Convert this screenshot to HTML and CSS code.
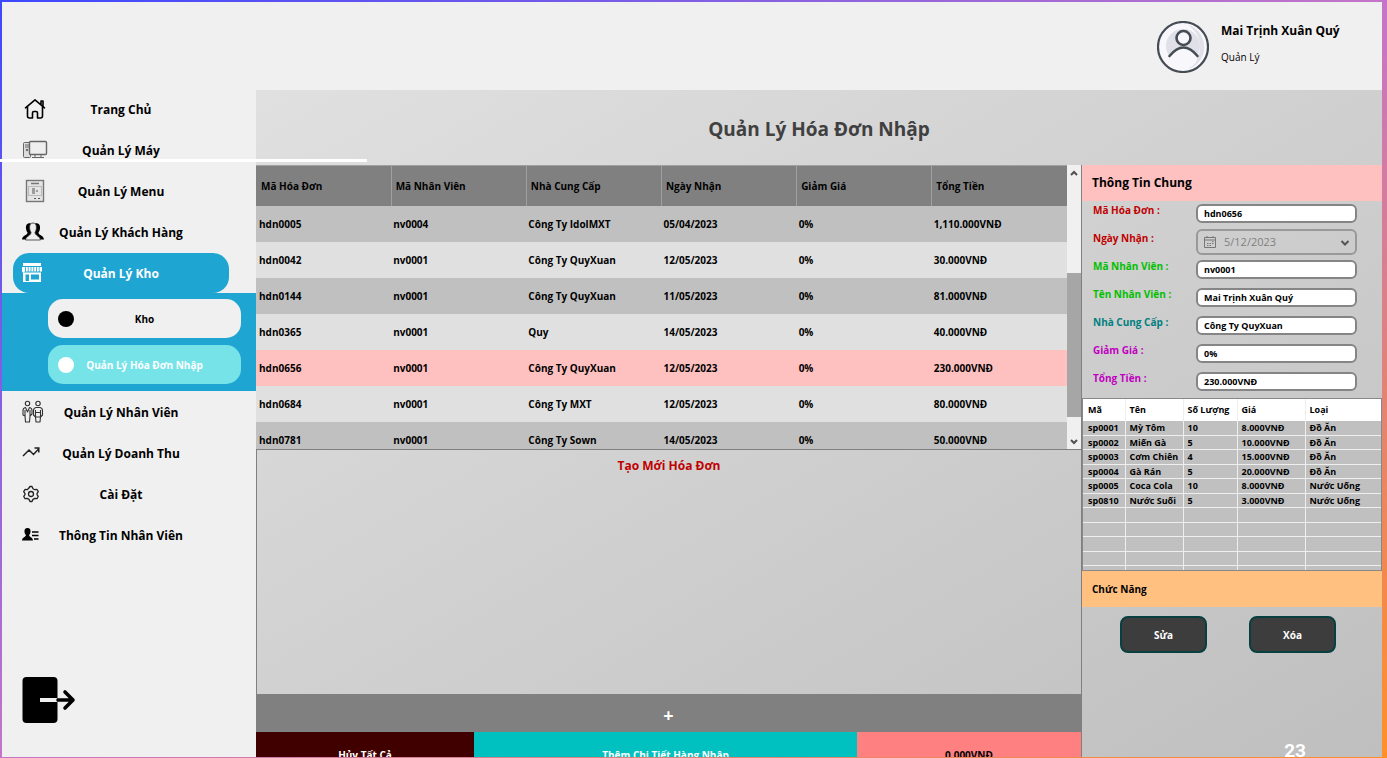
FILE: index.html
```html
<!DOCTYPE html>
<html lang="vi">
<head>
<meta charset="utf-8">
<title>Quản Lý Hóa Đơn Nhập</title>
<link rel="stylesheet" href="styles.css">
</head>
<body>
<div class="app">
  <nav class="sidebar">
    <a class="nav-item" href="#">
      <svg class="icon" width="24" height="24" viewBox="0 0 24 24" fill="none" stroke="#000" stroke-width="1.6" stroke-linejoin="round" stroke-linecap="round"><path d="M2.500 10.800 12 2.800l9.500 8M18 7.500V4h2v5M4.500 9.500V19q0 2 2 2h3v-5q0-1.500 1.500-1.500h2q1.500 0 1.500 1.500v5h3q2 0 2-2V9.500"/></svg>
      <span>Trang Chủ</span>
    </a>
    <a class="nav-item" href="#">
      <svg class="icon" width="26" height="24" viewBox="0 0 26 24" fill="none" stroke="#666" stroke-width="1"><rect x="1.500" y="4.500" width="7" height="15" rx="1" fill="#ddd"/><path d="M3 7h4M3 9h4" /><circle cx="5" cy="12" r=".8" fill="#333"/><rect x="7.500" y="3.500" width="17" height="13" rx="1" fill="#eee" stroke-width="1.400"/><path d="M13 17v2M19 17v2M10 19.500h12"/></svg>
      <span>Quản Lý Máy</span>
    </a>
    <a class="nav-item" href="#">
      <svg class="icon" width="24" height="24" viewBox="0 0 24 24" fill="none" stroke="#777"><rect x="3.500" y="1.500" width="17" height="21" fill="#e4e4e4" stroke="#777" stroke-width="1.400"/><rect x="5.500" y="7.500" width="13" height="9" stroke="#bbb"/><path d="M8 4.500h8" stroke-width="1.500"/><path d="M9 10h3M9 12h3M9 14h3M13 12h2" stroke="#555"/><path d="M11 19.500h2M15 19.500h2" stroke="#555"/></svg>
      <span>Quản Lý Menu</span>
    </a>
    <a class="nav-item" href="#">
      <svg class="icon icon-left" width="24" height="22" viewBox="0 0 24 22"><path d="M9 2.500C5.500 1.500 3.500 4 4 7.500c.2 2 .8 3 1.500 4C6 14 .5 14 0 18.500h5.500q1-3.500 5-5zM13 2.500c3.500-1 5.500 1.500 5 5-.2 2-.8 3-1.500 4-.5 2.500 5 2.500 5.500 7h-5.500q-1-3.500-5-5z" fill="#000"/><path d="M11 2c-2.600 0-3.700 2.200-3.400 5 .2 2.200.8 3.200 1.400 4.200.3 3.300-5 3.800-5.500 7.800h15c-.5-4-5.800-4.500-5.500-7.800.6-1 1.200-2 1.400-4.200.3-2.800-.8-5-3.400-5z" fill="#eee" stroke="#333" stroke-width=".8"/></svg>
      <span>Quản Lý Khách Hàng</span>
    </a>
    <div class="nav-group">
      <a class="nav-item active" href="#">
        <svg class="icon icon-left" width="20" height="20" viewBox="0 0 20 20"><path d="M1 0h18v3H1zM0 4h3v4a1.500 1.500 0 0 1-3 0zM3.800 4h2v4.500h-2zM6.600 4h2v4.500h-2zM9.400 4h2v4.500h-2zM12.200 4h2v4.500h-2zM15 4h1.800v4.500H15zM17.500 4H20v4a1.500 1.500 0 0 1-2.500 0z" fill="#fff"/><path d="M1 9.500h18V19H1zM3.500 11.500V18h3.500v-6.500zM9 11.500v5h8v-5z" fill="#fff" fill-rule="evenodd"/></svg>
        <span>Quản Lý Kho</span>
      </a>
      <div class="submenu">
        <a class="sub-item" href="#"><i class="dot"></i><span>Kho</span></a>
        <a class="sub-item current" href="#"><i class="dot"></i><span>Quản Lý Hóa Đơn Nhập</span></a>
      </div>
    </div>
    <a class="nav-item" href="#">
      <svg class="icon icon-left" width="22" height="24" viewBox="0 0 22 24" fill="none" stroke="#333" stroke-width="1.100" stroke-linejoin="round"><circle cx="5.500" cy="3.500" r="2.200"/><path d="M3.500 7.500Q1 8 1 10.500V15l2 1 .5 6h4l.5-6 2-2v-3.500q0-2.500-2.500-3L5.500 12zM3 10v6M8 10v6"/><circle cx="16" cy="3.500" r="2.200"/><path d="M14 7.500q-2.500.5-2.500 3V15l2 2 .5 5h4l.5-5 2-2v-4.500q0-2.500-2.500-3zM13.500 10v7h5v-7M13.500 12.500h5"/></svg>
      <span>Quản Lý Nhân Viên</span>
    </a>
    <a class="nav-item" href="#">
      <svg class="icon icon-left" width="24" height="20" viewBox="0 0 24 20" fill="none" stroke="#222" stroke-width="1.500"><path d="m1 13 6-6 4.500 4.500L17 5.500M12.500 5h4.300v4.500"/></svg>
      <span>Quản Lý Doanh Thu</span>
    </a>
    <a class="nav-item" href="#">
      <svg class="icon icon-left" width="22" height="18" viewBox="1 0 22 18" fill="none" stroke="#222" stroke-width="1.300" stroke-linejoin="round"><path d="M7.500 3.500 9 1.500h2l1 2.200 1.800 1L16 4.500l1.300 2.200-1.300 1.900v1l1.300 1.700L16 13.700l-2.200-.3-1.800 1-1 2.100H9l-1-2.100-1.800-1-2.200.3-1.300-2.400L4 9.600v-1L2.700 6.700 4 4.500l2.200.2z"/><circle cx="10" cy="9" r="2.500"/></svg>
      <span>Cài Đặt</span>
    </a>
    <a class="nav-item" href="#">
      <svg class="icon icon-left" width="22" height="18" viewBox="1 0 22 18"><path d="M6.500 2C4 2 3.200 4 3.500 6c.2 1.500.8 2.500 1.400 3 0 2.500-3.500 1.500-3.900 5.500h11c-.4-4-3.900-3-3.900-5.500.6-.5 1.200-1.500 1.400-3 .3-2-.5-4-3-4z"/><path d="M11 6h6.500M11 9.500h6.500M13 13h4.500" stroke="#000" stroke-width="1.300"/></svg>
      <span>Thông Tin Nhân Viên</span>
    </a>
    <button class="logout" type="button" aria-label="Đăng xuất">
      <svg width="54" height="48" viewBox="0 0 54 48" fill="none" stroke-linecap="round"><rect x=".5" y="1" width="35" height="46" rx="4" fill="#000"/><path d="M18 24H35" stroke="#f0f0f0" stroke-width="4" stroke-linecap="butt"/><path d="M36 24h14M43 16l8 8-8 8" stroke="#000" stroke-width="3.600" stroke-linejoin="round"/></svg>
    </button>
  </nav>

  <header class="topbar">
    <svg width="52" height="52" viewBox="0 0 52 52" fill="none"><circle cx="26" cy="26" r="25" fill="#f8f8fc" stroke="#454c54" stroke-width="2.200"/><path d="M31 4a23 23 0 0 1 0 44 26 26 0 0 0 0-44z" fill="#dfe0e8"/><circle cx="26" cy="25" r="17" fill="#dfe0e8"/><path d="M12 36q14-18 28 0 0 10-14 12-14-2-14-12z" fill="#f8f8fc"/><circle cx="26.500" cy="17" r="7" fill="#f8f8fc" stroke="#454c54" stroke-width="2.600"/><path d="M12.500 35q14-17 28 0" stroke="#454c54" stroke-width="2.600" stroke-linecap="round"/></svg>
    <div class="user">
      <strong>Mai Trịnh Xuân Quý</strong>
      <span>Quản Lý</span>
    </div>
  </header>

  <main class="content">
    <h1>Quản Lý Hóa Đơn Nhập</h1>
    <div class="columns">
      <section class="invoices">
        <div class="list">
          <div class="list-body">
            <table class="invoice-table">
              <thead><tr><th>Mã Hóa Đơn</th><th>Mã Nhân Viên</th><th>Nhà Cung Cấp</th><th>Ngày Nhận</th><th>Giảm Giá</th><th>Tổng Tiền</th></tr></thead>
              <tbody>
                <tr><td>hdn0005</td><td>nv0004</td><td>Công Ty IdolMXT</td><td>05/04/2023</td><td>0%</td><td>1,110.000VNĐ</td></tr>
                <tr><td>hdn0042</td><td>nv0001</td><td>Công Ty QuyXuan</td><td>12/05/2023</td><td>0%</td><td>30.000VNĐ</td></tr>
                <tr><td>hdn0144</td><td>nv0001</td><td>Công Ty QuyXuan</td><td>11/05/2023</td><td>0%</td><td>81.000VNĐ</td></tr>
                <tr><td>hdn0365</td><td>nv0001</td><td>Quy</td><td>14/05/2023</td><td>0%</td><td>40.000VNĐ</td></tr>
                <tr class="selected"><td>hdn0656</td><td>nv0001</td><td>Công Ty QuyXuan</td><td>12/05/2023</td><td>0%</td><td>230.000VNĐ</td></tr>
                <tr><td>hdn0684</td><td>nv0001</td><td>Công Ty MXT</td><td>12/05/2023</td><td>0%</td><td>80.000VNĐ</td></tr>
                <tr><td>hdn0781</td><td>nv0001</td><td>Công Ty Sown</td><td>14/05/2023</td><td>0%</td><td>50.000VNĐ</td></tr>
              </tbody>
            </table>
          </div>
          <div class="scrollbar">
            <svg width="14" height="16" viewBox="0 0 14 16" fill="none" stroke="#505050" stroke-width="2"><path d="m4 10 3-3 3 3"/></svg>
            <div class="track"><div class="thumb"></div></div>
            <svg width="14" height="16" viewBox="0 0 14 16" fill="none" stroke="#505050" stroke-width="2"><path d="m4 7 3 3 3-3"/></svg>
          </div>
        </div>
        <div class="draft"><h2>Tạo Mới Hóa Đơn</h2></div>
        <button class="add" type="button">+</button>
        <div class="actions">
          <button class="cancel-all" type="button">Hủy Tất Cả</button>
          <button class="add-detail" type="button">Thêm Chi Tiết Hàng Nhập</button>
          <output class="total">0.000VNĐ</output>
        </div>
      </section>

      <aside class="details">
        <h2 class="info-title">Thông Tin Chung</h2>
        <form class="fields">
          <label class="red" for="ma">Mã Hóa Đơn :</label><input id="ma" value="hdn0656">
          <label class="red" for="ngay">Ngày Nhận :</label>
          <div class="date">
            <select id="ngay" disabled><option>5/12/2023</option></select>
            <svg class="calendar" width="12" height="12" viewBox="0 0 12 12" fill="none" stroke="#777"><path d="M.5 1.500h11v10H.5zM.5 4h11M3 0v2M9 0v2"/><path d="M3 9.500h1.500M3 7.500h1.500M5.500 9.500H7M5.500 7.500H7M8 7.500h1.500M8 5.700h1.500"/></svg>
            <svg class="chevron" width="10" height="8" viewBox="0 0 10 8" fill="none" stroke="#555" stroke-width="2"><path d="m1.500 2 3.500 3.500L8.500 2"/></svg>
          </div>
          <label class="green" for="manv">Mã Nhân Viên :</label><input id="manv" value="nv0001">
          <label class="green" for="tennv">Tên Nhân Viên :</label><input id="tennv" value="Mai Trịnh Xuân Quý">
          <label class="teal" for="ncc">Nhà Cung Cấp :</label><input id="ncc" value="Công Ty QuyXuan">
          <label class="purple" for="giam">Giảm Giá :</label><input id="giam" value="0%">
          <label class="purple" for="tong">Tổng Tiền :</label><input id="tong" value="230.000VNĐ">
        </form>
        <div class="products">
          <table>
            <colgroup><col class="c-code"><col class="c-name"><col class="c-qty"><col class="c-price"><col></colgroup>
            <thead><tr><th>Mã</th><th>Tên</th><th>Số Lượng</th><th>Giá</th><th>Loại</th></tr></thead>
            <tbody>
              <tr><td>sp0001</td><td>Mỳ Tôm</td><td>10</td><td>8.000VNĐ</td><td>Đồ Ăn</td></tr>
              <tr><td>sp0002</td><td>Miến Gà</td><td>5</td><td>10.000VNĐ</td><td>Đồ Ăn</td></tr>
              <tr><td>sp0003</td><td>Cơm Chiên</td><td>4</td><td>15.000VNĐ</td><td>Đồ Ăn</td></tr>
              <tr><td>sp0004</td><td>Gà Rán</td><td>5</td><td>20.000VNĐ</td><td>Đồ Ăn</td></tr>
              <tr><td>sp0005</td><td>Coca Cola</td><td>10</td><td>8.000VNĐ</td><td>Nước Uống</td></tr>
              <tr><td>sp0810</td><td>Nước Suối</td><td>5</td><td>3.000VNĐ</td><td>Nước Uống</td></tr>
              <tr><td></td><td></td><td></td><td></td><td></td></tr>
              <tr><td></td><td></td><td></td><td></td><td></td></tr>
              <tr><td></td><td></td><td></td><td></td><td></td></tr>
              <tr><td></td><td></td><td></td><td></td><td></td></tr>
              <tr class="rest"><td></td><td></td><td></td><td></td><td></td></tr>
            </tbody>
          </table>
        </div>
        <h2 class="func-title">Chức Năng</h2>
        <div class="func-buttons">
          <button type="button">Sửa</button>
          <button type="button">Xóa</button>
        </div>
      </aside>
    </div>
  </main>
  <div class="rule"></div>
  <div class="page-number">23</div>
</div>
</body>
</html>
```
FILE: styles.css
```css
* { box-sizing: border-box; }

body {
  margin: 0;
  height: 100vh;
  overflow: hidden;
  padding: 2px 5px 1px 2px;
  background: linear-gradient(to bottom right, #3c48ff, #c575c8 50%, #ff9028);
  font-family: "Open Sans", "Noto Sans", sans-serif;
  font-size: 10px;
  font-weight: 700;
  color: #000;
}

a { color: inherit; text-decoration: none; }
button, input, select { font: inherit; margin: 0; }
button { border: 0; padding: 0; }
h1, h2 { margin: 0; }

.app {
  height: 100%;
  display: grid;
  grid-template: 88px minmax(0, 1fr) / 254px minmax(0, 1fr);
  overflow: hidden;
  background: #f0f0f0;
}

/* Sidebar */
.sidebar {
  grid-row: 1 / 3;
  display: flex;
  flex-direction: column;
  gap: 1px;
  padding: 87px 0 33px;
  font-size: 12px;
}
.nav-item {
  height: 40px;
  flex: none;
  margin: 0 27px 0 11px;
  display: grid;
  grid-template-columns: 44px 1fr 44px;
  align-items: center;
  text-align: center;
  white-space: nowrap;
}
.nav-item span, .sub-item span { justify-self: center; }
.icon { justify-self: center; }
.icon-left { justify-self: start; margin-left: 9px; }
.nav-item.active {
  background: #1fa5d1;
  color: #fff;
  border-radius: 16px;
}
.submenu {
  display: grid;
  gap: 7px;
  padding: 6px 15px 7px 46px;
  background: #1fa5d1;
  font-size: 10px;
}
.sub-item {
  height: 39px;
  display: grid;
  grid-template-columns: 36px 1fr 36px;
  align-items: center;
  justify-items: center;
  white-space: nowrap;
  border-radius: 15px;
  background: #f0f0f0;
}
.sub-item.current { background: #76e3e9; color: #fff; }
.dot {
  width: 16px;
  height: 16px;
  border-radius: 50%;
  background: #000;
}
.current .dot { background: #fff; }
.logout {
  margin: auto auto 0 20px;
  height: 48px;
  background: none;
}

/* Top bar */
.topbar {
  display: flex;
  justify-content: flex-end;
  align-items: center;
  gap: 12px;
  padding-top: 2px;
}
.user { width: 161px; padding-bottom: 6px; }
.user strong, .user span { display: block; line-height: 26px; }
.user strong { font-size: 12px; font-weight: 700; }
.user span { font-size: 10px; font-weight: 400; }

/* Content */
.content {
  display: flex;
  flex-direction: column;
  min-height: 0;
  background: linear-gradient(to bottom right, #e0e0e0, #bfbfbf);
}
h1 {
  flex: none;
  padding-top: 3px;
  font-size: 19px;
  line-height: 72px;
  text-align: center;
  color: #404040;
}
.columns {
  flex: 1;
  min-height: 0;
  display: grid;
  grid-template-columns: minmax(0, 1fr) 300px;
}
.invoices {
  display: flex;
  flex-direction: column;
  margin-bottom: -21px;
  border-right: 1px solid #808080;
}
.list { display: flex; height: 284px; flex: none; }
.list-body { flex: 1; overflow: hidden; }
.invoice-table {
  width: 100%;
  table-layout: fixed;
  border-collapse: collapse;
}
.invoice-table th {
  height: 40px;
  padding: 0 0 0 5px;
  text-align: left;
  background: #808080;
  border-top: 1px solid #a0a0a0;
}
.invoice-table th + th { padding-left: 4px; border-left: 1px solid #a0a0a0; }
.invoice-table td { height: 36px; padding: 0 0 0 3px; }
.invoice-table td + td { padding-left: 2px; }
.invoice-table tr:nth-child(odd) td { background: #c0c0c0; }
.invoice-table tr:nth-child(even) td { background: #e0e0e0; }
.invoice-table tbody .selected td { background: #ffc0c0; }
.scrollbar {
  width: 14px;
  display: flex;
  flex-direction: column;
  background: #f0f0f0;
}
.scrollbar svg { flex: none; }
.track { flex: 1; display: flex; align-items: flex-end; padding-bottom: 16px; }
.thumb { width: 100%; height: 61%; background: #a6a6a6; }

.draft {
  flex: 1;
  min-height: 0;
  border: 1px solid #808080;
  border-right: 0;
}
.draft h2 {
  font-size: 12px;
  line-height: 32px;
  text-align: center;
  color: #c00000;
}
.add {
  height: 37px;
  padding-top: 2px;
  background: #808080;
  color: #fff;
  font-size: 18px;
}
.actions {
  height: 46px;
  display: grid;
  grid-template-columns: 218fr 383fr 224fr;
}
.cancel-all { background: #400000; color: #fff; }
.add-detail { background: #00c0c0; color: #fff; }
.total { background: #ff8080; text-align: center; line-height: 46px; }

/* Details */
.info-title {
  padding-left: 10px;
  line-height: 36px;
  font-size: 12px;
  background: #ffc0c0;
}
.fields {
  display: grid;
  grid-template-columns: 103px 1fr;
  grid-auto-rows: 28px;
  align-items: center;
  padding: 0 25px 1px 11px;
}
.fields label { align-self: start; line-height: 18px; }
.fields input {
  width: 100%;
  height: 19px;
  margin-bottom: 3px;
  padding: 0 6px;
  border: 2px solid #858585;
  border-radius: 6px;
  background: #fff;
  font-size: 9px;
}
.red { color: #c00000; }
.green { color: #00c000; }
.teal { color: #008080; }
.purple { color: #c000c0; }
.date { position: relative; margin-bottom: 3px; }
.date select {
  display: block;
  width: 100%;
  height: 26px;
  padding: 0 26px;
  appearance: none;
  border: 2px solid #999;
  border-radius: 6px;
  background: transparent;
  color: #808080;
  opacity: 1;
  font-size: 11px;
  font-weight: 400;
}
.calendar, .chevron { position: absolute; }
.calendar { left: 8px; top: 7px; }
.chevron { right: 7px; top: 10px; }

.products { border: 1px solid #888; font-size: 9px; }
.products table {
  width: 100%;
  height: 171px;
  table-layout: fixed;
  border-collapse: collapse;
  line-height: 12px;
  white-space: nowrap;
}
.c-code { width: 42px; }
.c-name { width: 58px; }
.c-qty { width: 54px; }
.c-price { width: 68px; }
.products th { height: 22px; background: #fff; text-align: left; }
.products th, .products td { padding: 0 0 0 5px; }
.products td { height: 14px; background: #c0c0c0; border-bottom: 1px solid #eee; }
.products th + th, .products td + td { padding-left: 4px; border-left: 1px solid #eee; }
.products .rest td { height: 4px; border-bottom: 0; }

.func-title {
  padding-left: 10px;
  font-size: 10px;
  line-height: 36px;
  background: #ffc080;
}
.func-buttons {
  display: flex;
  justify-content: center;
  gap: 42px;
  padding: 9px 8px 0 0;
}
.func-buttons button {
  width: 87px;
  height: 37px;
  border: 2px solid #083f40;
  border-radius: 8px;
  background: #3d3d3d;
  color: #fff;
}

/* Overlays */
.rule {
  position: absolute;
  left: 0;
  top: 159px;
  width: 367px;
  height: 3px;
  background: #fff;
}
.page-number {
  position: absolute;
  right: 81px;
  bottom: -3px;
  font: 700 19px/21px Roboto, sans-serif;
  color: #fff;
}
```
